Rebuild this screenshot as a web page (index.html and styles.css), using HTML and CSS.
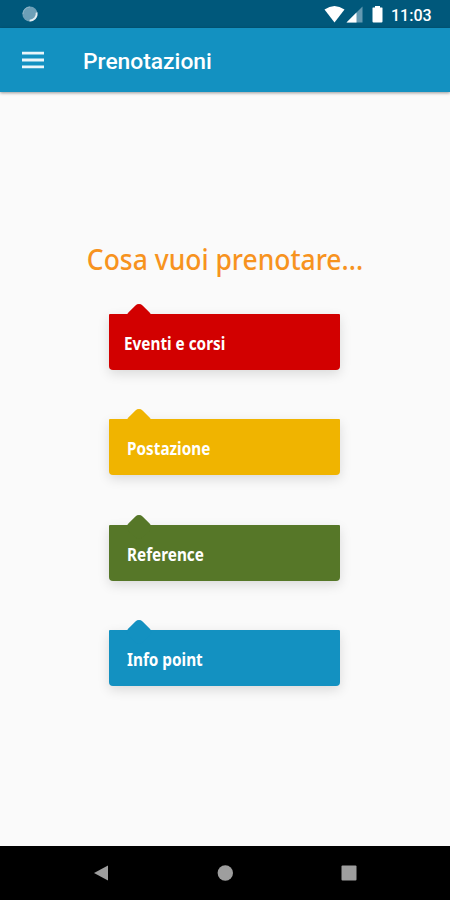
FILE: index.html
```html
<!DOCTYPE html>
<html lang="it">
<head>
    <meta charset="UTF-8">
    <meta name="viewport" content="width=device-width, initial-scale=1.0">
    <title>Prenotazioni</title>
    <link rel="stylesheet" href="styles.css">
</head>
<body>
<div class="status-bar">
    <svg class="sync" width="18" height="18" viewBox="0 0 18 18">
        <circle cx="9" cy="9" r="7.6" fill="#6d9fb7"/>
        <path d="M15.6 7.5A7 7 0 0 1 8.6 15.6" fill="none" stroke="#e3edf2" stroke-width="1.8"/>
        <path d="M2 9A7 7 0 0 1 9 2" fill="none" stroke="#8fb5c7" stroke-width="1"/>
    </svg>
    <svg class="indicators" width="60" height="20" viewBox="0 0 60 20">
        <path d="M0.5 4.500Q10.500-2.500 20.500 4.500L10.500 17.500Z" fill="#fff"/>
        <path d="M38.500 1.500V17.500H22.500Z" fill="#6499b2"/>
        <path d="M32.500 7.500V17.500H22.500Z" fill="#fff"/>
        <path d="M51 1h5v1.500h2q.500 0 .500.500v13.500q0 1-1 1h-8q-1 0-1-1V3q0-.500.500-.500h2Z" fill="#fff"/>
    </svg>
    <span class="clock">11:03</span>
</div>
<header class="toolbar">
    <button class="menu-btn" aria-label="Menu">
        <svg width="22" height="18" viewBox="0 0 22 18">
            <path d="M0 2.200h22M0 9h22M0 15.800h22" stroke="#e9f5fa" stroke-width="2.800"/>
        </svg>
    </button>
    <h1>Prenotazioni</h1>
</header>
<main>
    <h2>Cosa vuoi prenotare...</h2>
    <div class="cards">
        <a class="card red"><span class="label">Eventi e corsi</span></a>
        <a class="card yellow"><span class="label">Postazione</span></a>
        <a class="card green"><span class="label">Reference</span></a>
        <a class="card blue"><span class="label">Info point</span></a>
    </div>
</main>
<nav class="nav-bar">
    <svg width="16" height="16" viewBox="0 0 16 16"><path d="M15 0.500V15.500L1 8Z" fill="#9e9e9e"/></svg>
    <svg width="16" height="16" viewBox="0 0 16 16"><circle cx="8.300" cy="8" r="7.700" fill="#9e9e9e"/></svg>
    <svg width="16" height="16" viewBox="0 0 16 16"><rect x="0.500" y="0.500" width="15" height="15" rx="1" fill="#9e9e9e"/></svg>
</nav>
</body>
</html>
```
FILE: styles.css
```css
* {
    box-sizing: border-box;
}
body {
    margin: 0;
    height: 900px;
    display: flex;
    flex-direction: column;
    overflow: hidden;
    background-color: #fafafa;
    font-family: "Noto Sans", sans-serif;
}
.status-bar {
    height: 28px;
    padding: 0 18px 0 21px;
    display: flex;
    align-items: center;
    background-color: #00587b;
    color: #fff;
}
.indicators {
    margin-left: auto;
    margin-top: 2px;
}
.clock {
    width: 41px;
    margin-left: 7px;
    margin-top: 2px;
    font: 500 16px Roboto, sans-serif;
    white-space: nowrap;
}
.toolbar {
    height: 64px;
    padding-left: 22px;
    display: flex;
    align-items: center;
    background-color: #1391c1;
    box-shadow: 0 1px 3px rgba(0, 0, 0, 0.4);
}
.menu-btn {
    display: flex;
    width: 22px;
    margin-right: 39px;
    padding: 0;
    border: none;
    background: none;
}
h1 {
    margin: 3px 0 0;
    color: #fff;
    font: 500 22.8px Roboto, sans-serif;
}
main {
    flex: 1;
    padding-top: 147px;
}
h2 {
    height: 40px;
    margin: 0;
    color: #f7931e;
    font-size: 28px;
    font-weight: 500;
    line-height: 40px;
    text-align: center;
    white-space: nowrap;
    transform: scaleX(0.945);
}
.cards {
    width: 231px;
    margin: 35px auto 0 109px;
    display: flex;
    flex-direction: column;
    gap: 49.400px;
}
.card {
    position: relative;
    height: 56px;
    padding: 3px 0 0 18px;
    display: flex;
    align-items: center;
    border-radius: 1px 1px 4px 4px;
    box-shadow: 0 4px 12px rgba(0, 0, 0, 0.13);
    color: #fff;
    font-size: 17px;
    font-weight: 700;
}
/* pointer on the top edge */
.card::before {
    content: "";
    position: absolute;
    top: -8px;
    left: 20px;
    width: 20px;
    height: 20px;
    border-radius: 5px;
    background-color: inherit;
    transform: rotate(45deg);
}
.label {
    position: relative;
    white-space: nowrap;
    transform: scaleX(0.9);
    transform-origin: left;
}
.red {
    padding-left: 15px;
    background-color: #d20000;
}
.yellow {
    background-color: #f0b400;
}
.green {
    background-color: #567728;
}
.blue {
    background-color: #1391c1;
}
.nav-bar {
    height: 54px;
    padding: 0 93px;
    display: flex;
    align-items: center;
    justify-content: space-between;
    background-color: #000;
}
```
